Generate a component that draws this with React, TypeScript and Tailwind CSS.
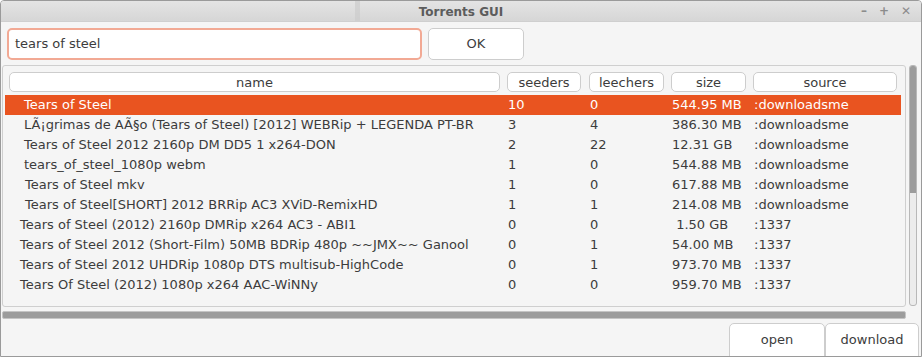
import React from "react";

type Row = { name: string; pad: string; seeders: string; leechers: string; size: string; source: string; sel?: boolean };

const rows: Row[] = [
  { name: "Tears of Steel", pad: "pl-[19px]", seeders: "10", leechers: "0", size: "544.95 MB", source: ":downloadsme", sel: true },
  { name: "LÃ¡grimas de AÃ§o (Tears of Steel) [2012] WEBRip + LEGENDA PT-BR", pad: "pl-[19px]", seeders: "3", leechers: "4", size: "386.30 MB", source: ":downloadsme" },
  { name: "Tears of Steel 2012 2160p DM DD5 1 x264-DON", pad: "pl-[19px]", seeders: "2", leechers: "22", size: "12.31 GB", source: ":downloadsme" },
  { name: "tears_of_steel_1080p webm", pad: "pl-[19px]", seeders: "1", leechers: "0", size: "544.88 MB", source: ":downloadsme" },
  { name: "Tears of Steel mkv", pad: "pl-[20px]", seeders: "1", leechers: "0", size: "617.88 MB", source: ":downloadsme" },
  { name: "Tears of Steel[SHORT] 2012 BRRip AC3 XViD-RemixHD", pad: "pl-[20px]", seeders: "1", leechers: "1", size: "214.08 MB", source: ":downloadsme" },
  { name: "Tears of Steel (2012) 2160p DMRip x264 AC3 - ABI1", pad: "pl-[15px]", seeders: "0", leechers: "0", size: "\u00a01.50 GB", source: ":1337" },
  { name: "Tears of Steel 2012 (Short-Film) 50MB BDRip 480p ~~JMX~~ Ganool", pad: "pl-[15px]", seeders: "0", leechers: "1", size: "54.00 MB", source: ":1337" },
  { name: "Tears of Steel 2012 UHDRip 1080p DTS multisub-HighCode", pad: "pl-[15px]", seeders: "0", leechers: "1", size: "973.70 MB", source: ":1337" },
  { name: "Tears Of Steel (2012) 1080p x264 AAC-WiNNy", pad: "pl-[15px]", seeders: "0", leechers: "0", size: "959.70 MB", source: ":1337" },
];

const cols = "grid grid-cols-[499px_82px_82px_82px_151px]";

function Header({ label, cls }: { label: string; cls: string }) {
  return (
    <div className={cls}>
      <div className="h-[20px] bg-white border border-[#cdcdcd] rounded-[5px] flex items-center justify-center text-[13px] text-[#3c3c3c] leading-none">
        {label}
      </div>
    </div>
  );
}

export default function App() {
  return (
    <div
      className="w-[922px] h-[357px] bg-[#f5f5f5] border border-[#9a9a9a] rounded-t-[4px] flex flex-col overflow-hidden text-[#3c3c3c]"
      style={{ fontFamily: '"DejaVu Sans", sans-serif' }}
    >
      {/* title bar */}
      <div className="relative h-[21px] shrink-0 bg-gradient-to-b from-[#e4e4e4] to-[#d6d6d6] border-b border-[#cfcfcf] flex items-center justify-center">
        <div className="absolute left-[354px] top-0 h-full w-[5px] bg-[#cccccc] opacity-70" />
        <span className="text-[12px] font-bold text-[#5c5c5c] pt-[1px]">Torrents GUI</span>
        <div className="absolute right-[10px] top-0 h-full flex items-center gap-[12px] text-[#8c8c8c] text-[12px] font-bold">
          <span>–</span>
          <span>+</span>
          <span>✕</span>
        </div>
      </div>

      {/* search row */}
      <div className="flex gap-[6px] pl-[6px] pt-[6px] shrink-0">
        <div className="w-[415px] h-[32px] bg-white border-2 border-[#f2a994] rounded-[5px] flex items-center pl-[6px] text-[13px] text-[#3c3c3c]">
          tears of steel
        </div>
        <div className="w-[96px] h-[32px] bg-white border border-[#cdcdcd] rounded-[5px] flex items-center justify-center text-[13px]">
          OK
        </div>
      </div>

      {/* table area */}
      <div className="flex pl-[1px] pt-[5px] shrink-0">
        <div className="w-[904px] h-[242px] border border-[#cfcfcf] rounded-[3px] pl-[2px] pt-[6px] flex flex-col">
          <div className={`${cols} w-[896px]`}>
            <Header label="name" cls="pl-[4px] pr-[4px]" />
            <Header label="seeders" cls="pl-[3px] pr-[5px]" />
            <Header label="leechers" cls="pl-[3px] pr-[4px]" />
            <Header label="size" cls="pl-[3px] pr-[4px]" />
            <Header label="source" cls="pl-[3px] pr-[4px]" />
          </div>
          <div className="mt-[3px] flex flex-col">
            {rows.map((r, i) => (
              <div
                key={i}
                className={`${cols} w-[896px] h-[20px] items-center text-[13px] whitespace-pre ${r.sel ? "bg-[#e95420] text-white" : "text-[#3c3c3c]"}`}
              >
                <div className={`${r.pad} overflow-hidden`}>{r.name}</div>
                <div className="pl-[4px]">{r.seeders}</div>
                <div className="pl-[4px]">{r.leechers}</div>
                <div className="pl-[4px]">{r.size}</div>
                <div className="pl-[4px]">{r.source}</div>
              </div>
            ))}
          </div>
        </div>
        {/* vertical scrollbar */}
        <div className="ml-[3px] w-[8px] h-[241px] rounded-[3px] border border-[#b8b8b8] bg-[#ececec] flex flex-col overflow-hidden">
          <div className="h-[127px] bg-[#9c9c9c] shrink-0" />
        </div>
      </div>

      {/* horizontal scrollbar */}
      <div className="pl-[1px] pt-[4px] shrink-0">
        <div className="w-[904px] h-[8px] bg-[#9c9c9c] border border-[#c4c4c4] rounded-[2px]" />
      </div>

      {/* bottom buttons */}
      <div className="flex justify-end pr-[2px] pt-[4px] shrink-0">
        <div className="w-[96px] h-[36px] bg-white border border-[#cdcdcd] rounded-t-[5px] flex items-center justify-center text-[13px] pb-[3px]">
          open
        </div>
        <div className="w-[94px] h-[36px] bg-white border border-[#cdcdcd] rounded-t-[5px] flex items-center justify-center text-[13px] pb-[3px]">
          download
        </div>
      </div>
    </div>
  );
}
